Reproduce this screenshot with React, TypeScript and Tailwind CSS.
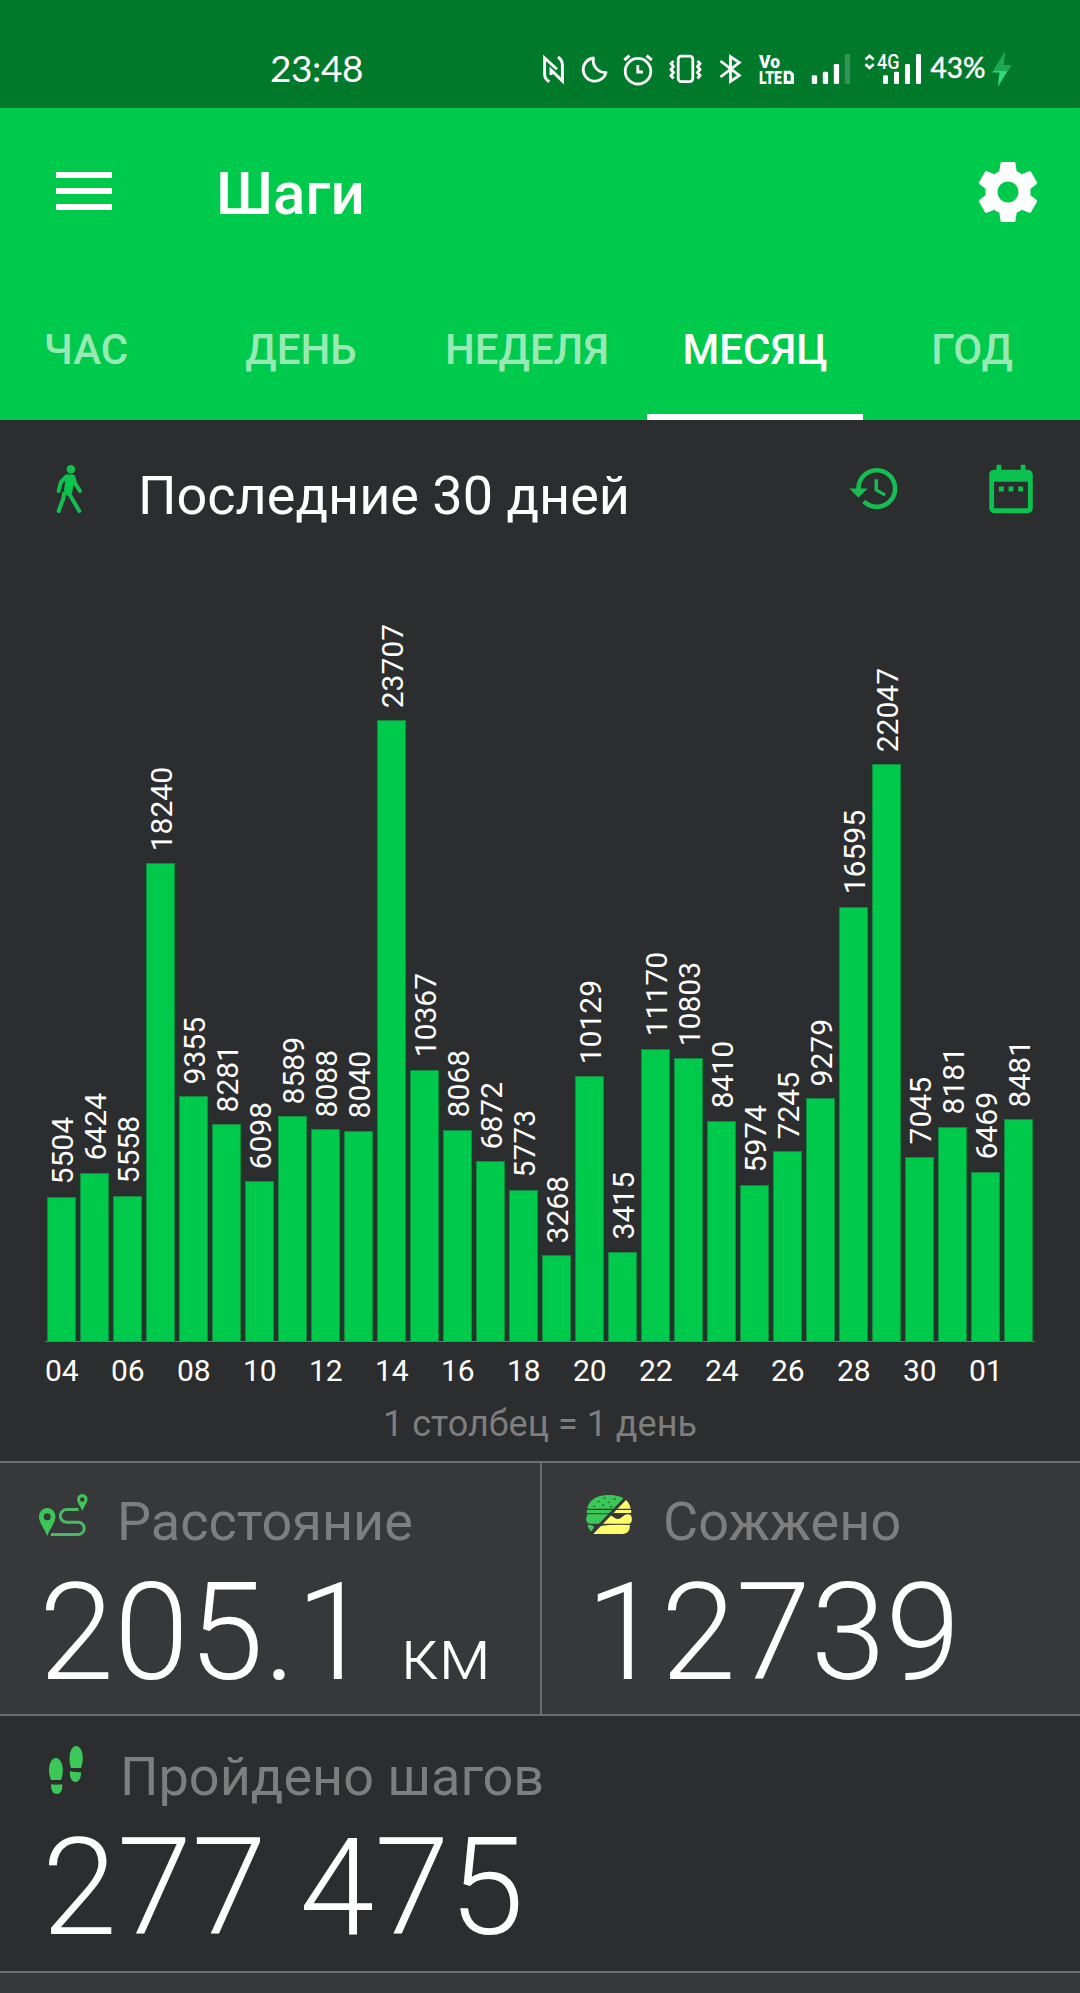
import React from "react";
import { MdDateRange, MdHistory } from "react-icons/md";

const steps = [
  5504, 6424, 5558, 18240, 9355, 8281, 6098, 8589, 8088, 8040, 23707, 10367, 8068, 6872, 5773, 3268, 10129, 3415,
  11170, 10803, 8410, 5974, 7245, 9279, 16595, 22047, 7045, 8181, 6469, 8481,
];
const days = ["04", "06", "08", "10", "12", "14", "16", "18", "20", "22", "24", "26", "28", "30", "01"];
const PX_PER_STEP = 0.02618;

function StatusBar() {
  return (
    <div className="flex h-[108px] shrink-0 items-center bg-[#00792b] pl-[270px] text-white">
      <span className="w-[270px] pt-[27px] font-['Lato'] text-[37px] leading-none tracking-[-0.4px]">23:48</span>
      <svg className="mt-[30px] h-[38px] w-[390px]" viewBox="540 50 390 38" fill="none" stroke="#fff" strokeWidth="2.8">
        {/* NFC */}
        <path d="M549.3 81.8Q544.6 79 544.6 74V58L557 69.3" strokeWidth="2.9" />
        <path d="M558 57Q562.4 60 562.4 65V81L551 70V75" strokeWidth="2.9" />
        {/* Do not disturb */}
        <path d="M593.5 58A11.6 11.6 0 1 0 606 72.5A12 12 0 0 1 593.5 58Z" strokeLinejoin="round" />
        {/* Alarm */}
        <circle cx="638" cy="71.2" r="12.8" />
        <path d="M637.8 65V72H643" />
        <path d="M624.3 60L629.5 55.6M646.5 55.6L651.8 60" strokeWidth="3" />
        {/* Vibration */}
        <rect x="678.2" y="56.2" width="14.6" height="25.4" rx="3" />
        <path d="M673.5 61L671 63.5L673.5 66.5L671 69.5L673.5 72.5L671 75.5L673.5 78.5M697.5 61L700 63.5L697.5 66.5L700 69.5L697.5 72.5L700 75.5L697.5 78.5" strokeWidth="2.8" />
        {/* Bluetooth */}
        <path d="M720.5 61L739.3 75.5L730.5 81.3V56.7L739.3 62.5L720.5 77" />
        {/* VoLTE */}
        <g fill="#fff" stroke="none" fontFamily="Roboto" fontWeight="900" fontSize="18.5">
          <text x="759" y="68" textLength="21" lengthAdjust="spacingAndGlyphs">Vo</text>
          <text x="759" y="84" textLength="23" lengthAdjust="spacingAndGlyphs">LTE</text>
        </g>
        <path d="M785.3 72.3H790L792.3 74.5V82.3H785.3Z" strokeWidth="3.2" />
        {/* Signal strength */}
        <g fill="#fff" stroke="none">
          <rect x="811.8" y="75.3" width="5.3" height="8.7" rx="1.3" />
          <rect x="822.8" y="71.7" width="5.3" height="12.3" rx="1.3" />
          <rect x="833.8" y="64" width="5.3" height="20" rx="1.3" />
          <rect x="844.8" y="54" width="5.3" height="30" rx="1.3" opacity="0.2" />
          <rect x="883" y="75.3" width="5" height="8.7" rx="1.3" />
          <rect x="894" y="71.7" width="5" height="12.3" rx="1.3" />
          <rect x="905" y="64" width="5" height="20" rx="1.3" />
          <rect x="916" y="54" width="5" height="30" rx="1.3" />
          <text x="877" y="68.5" fontFamily="Roboto" fontWeight="500" fontSize="20.5" textLength="22.5" lengthAdjust="spacingAndGlyphs">4G</text>
        </g>
        <path d="M865.5 59.5L869.6 55.8L873.7 59.5M865.5 64.3L869.6 68L873.7 64.3" strokeWidth="2.6" />
      </svg>
      <svg className="mt-[30px] h-[38px] w-[62px]" viewBox="930 50 62 38">
        <text x="930.5" y="78" fill="#fff" stroke="#fff" strokeWidth="0.5" fontFamily="Lato" fontSize="29" textLength="55" lengthAdjust="spacingAndGlyphs">
          43%
        </text>
      </svg>
      <svg className="mt-[31px] h-[36px] w-[20px]" viewBox="992 52 20 36">
        <path d="M1005 52L992.3 72.5H999.5L997.7 87L1011 65.5H1003.2Z" fill="#2fdc7c" />
        <path d="M1005 52L993 71H1007.6L1011 65.5H1003.2Z" fill="#1ca954" />
      </svg>
    </div>
  );
}

function Tab({ label, wide, active }: { label: string; wide?: boolean; active?: boolean }) {
  return (
    <div
      className={`flex h-full shrink-0 items-center justify-center border-b-[6px] pt-[9px] text-[42px] leading-none font-medium ${
        wide ? "w-[240px]" : "w-[216px]"
      } ${active ? "border-white text-white" : "border-transparent text-white/60"}`}
    >
      {label}
    </div>
  );
}

function Header() {
  return (
    <header className="h-[312px] shrink-0 overflow-hidden bg-[#00ca4b] text-white">
      <div className="flex h-[168px] items-center pr-[36px] pl-[56px]">
        <div className="-mt-[2px] flex w-[56px] flex-col gap-[10px]">
          <div className="h-[6px] bg-white" />
          <div className="h-[6px] bg-white" />
          <div className="h-[6px] bg-white" />
        </div>
        <h1 className="ml-[104px] flex-1 pt-[4px] text-[60px] leading-none font-medium">Шаги</h1>
        <svg className="size-[72px]" viewBox="0 0 24 24" fill="#fff">
          <path d="M12,15.5A3.5,3.5 0 0,1 8.5,12A3.5,3.5 0 0,1 12,8.5A3.5,3.5 0 0,1 15.5,12A3.5,3.5 0 0,1 12,15.5M19.43,12.97C19.47,12.65 19.5,12.33 19.5,12C19.5,11.67 19.47,11.34 19.43,11L21.54,9.37C21.73,9.22 21.78,8.95 21.66,8.73L19.66,5.27C19.54,5.05 19.27,4.96 19.05,5.05L16.56,6.05C16.04,5.66 15.5,5.32 14.87,5.07L14.5,2.42C14.46,2.18 14.25,2 14,2H10C9.75,2 9.54,2.18 9.5,2.42L9.13,5.07C8.5,5.32 7.96,5.66 7.44,6.05L4.95,5.05C4.73,4.96 4.46,5.05 4.34,5.27L2.34,8.73C2.21,8.95 2.27,9.22 2.46,9.37L4.57,11C4.53,11.34 4.5,11.67 4.5,12C4.5,12.33 4.53,12.65 4.57,12.97L2.46,14.63C2.27,14.78 2.21,15.05 2.34,15.27L4.34,18.73C4.46,18.95 4.73,19.03 4.95,18.95L7.44,17.94C7.96,18.34 8.5,18.68 9.13,18.93L9.5,21.58C9.54,21.82 9.75,22 10,22H14C14.25,22 14.46,21.82 14.5,21.58L14.87,18.93C15.5,18.67 16.04,18.34 16.56,17.94L19.05,18.95C19.27,19.03 19.54,18.95 19.66,18.73L21.66,15.27C21.78,15.05 21.73,14.78 21.54,14.63L19.43,12.97Z" />
        </svg>
      </div>
      <div className="-ml-[22px] flex h-[144px]">
        <Tab label="ЧАС" />
        <div className="-ml-[1px]">
          <Tab label="ДЕНЬ" />
        </div>
        <div className="-ml-[2px] flex">
          <Tab label="НЕДЕЛЯ" wide />
          <Tab label="МЕСЯЦ" active />
        </div>
        <div className="ml-[1px]">
          <Tab label="ГОД" />
        </div>
      </div>
    </header>
  );
}

function WalkIcon() {
  return (
    <svg className="h-[50px] w-[28px]" viewBox="55 464 28 50" fill="none" stroke="#14be50" strokeLinecap="round" strokeLinejoin="round">
      <circle cx="70.9" cy="469.3" r="4.3" fill="#14be50" stroke="none" />
      <path d="M66 475H73L74.3 477L71.8 492L70 495H66.5L64.6 490.5L65.5 482Z" fill="#06c84c" stroke="#06c84c" strokeWidth="1" />
      <path d="M66 477L61 482L58.6 491M73.3 477L75.5 484L80 491" strokeWidth="4" />
      <path d="M67 490L79.3 511M64 493.5L63.5 498L58.7 511" strokeWidth="4" />
    </svg>
  );
}

function Chart() {
  return (
    <section className="flex h-[921px] flex-col">
      <div className="flex h-[784px] w-[990px] items-end self-center border-b border-[#707172]">
        {steps.map((v, i) => (
          <div key={i} className="flex h-full w-[33px] flex-col items-center justify-end">
            <span className="mb-[12px] ml-[3px] rotate-180 text-[30px] leading-[30px] text-white [writing-mode:vertical-rl]">{v}</span>
            <div className="w-[33px] border-x-2 border-[#20362b]" style={{ height: v * PX_PER_STEP }}>
              <div className="h-full border-x border-t border-[#108a3c] bg-[#00ca4b]" />
            </div>
          </div>
        ))}
      </div>
      <div className="mt-[14px] flex w-[990px] self-center">
        {days.map((d) => (
          <div key={d} className="w-[66px]">
            <span className="block w-[33px] text-center text-[30px] leading-[30px] whitespace-nowrap text-white">
              {d}
            </span>
          </div>
        ))}
      </div>
      <div className="mt-[20px] text-center text-[36px] leading-none text-[#7e7e7e]">1 столбец = 1 день</div>
    </section>
  );
}

function RouteIcon() {
  return (
    <svg className="h-[44px] w-[52px]" viewBox="38 1493 52 44" fill="#3cc759">
      <path
        fillRule="evenodd"
        d="M47.2 1536.3C45 1529 38.9 1523 38.9 1516.5A8.3 8.5 0 0 1 55.5 1516.5C55.5 1523 49.4 1529 47.2 1536.3ZM47.2 1513.2A3.5 3.5 0 1 0 47.2 1520.2A3.5 3.5 0 1 0 47.2 1513.2Z"
      />
      <path
        fillRule="evenodd"
        d="M82.3 1511C81 1507 77.1 1503 77.1 1499.3A5.2 5.3 0 0 1 87.5 1499.3C87.5 1503 83.6 1507 82.3 1511ZM82.3 1497.2A2.3 2.3 0 1 0 82.3 1501.8A2.3 2.3 0 1 0 82.3 1497.2Z"
      />
      <path d="M78.5 1509.6H66.6A6.3 6.3 0 0 0 66.6 1522.2H78A6.2 6.2 0 0 1 78 1534.6H51" fill="none" stroke="#4abb62" strokeWidth="3" />
    </svg>
  );
}

function BurgerIcon() {
  return (
    <svg className="h-[39.3px] w-[46px]" viewBox="0 0 134 118" preserveAspectRatio="none">
      <defs>
        <clipPath id="upper">
          <path d="M0 0H118L18 108H0Z" />
        </clipPath>
        <clipPath id="lower">
          <path d="M134 0L125 6L20 118H134Z" />
        </clipPath>
      </defs>
      <g clipPath="url(#upper)" fill="#3cc759">
        <path d="M4 41C6 18 28 0 67 0S128 18 130 41Z" />
        <rect x="2" y="45" width="130" height="10" rx="3" />
        <path d="M4 58H130V86H8Q0 82 0 72Z" />
        <path d="M4 89L18 91L24 96L16 110Q7 104 4 89Z" />
        <g fill="#1d6a33">
          <ellipse cx="54" cy="9" rx="4" ry="2" />
          <ellipse cx="84" cy="12" rx="4" ry="2" />
          <ellipse cx="37" cy="20" rx="4" ry="2" />
          <ellipse cx="66" cy="22" rx="4" ry="2" />
          <ellipse cx="24" cy="34" rx="4" ry="2" />
          <ellipse cx="50" cy="30" rx="4" ry="2" />
          <ellipse cx="73" cy="35" rx="4" ry="2" />
        </g>
      </g>
      <g clipPath="url(#lower)" fill="#ffff6b">
        <path d="M80 41L108 14H116Q128 26 130 41Z" />
        <rect x="60" y="45" width="72" height="9" rx="3" />
        <path d="M40 86L62 60Q72 58 84 69Q95 76 106 65Q118 54 130 60Q134 66 134 74Q133 82 128 86Z" />
        <path d="M20 118L40 94Q70 88 128 90Q128 108 118 114Q110 118 95 118Z" />
      </g>
    </svg>
  );
}

function StepsIcon() {
  return (
    <svg className="h-[50px] w-[36px]" viewBox="48 1745 36 50" fill="#3cc759">
      <path d="M51 1780C49.5 1776 49 1773 49 1770C49 1764 51.5 1758 55.8 1758C60 1758 62.8 1764 62.8 1770C62.8 1774 62 1777 61 1780Z" />
      <path d="M51 1784.3Q56.5 1785 62 1784.3C63 1788 61.5 1794 57 1794C52.5 1794 51 1790 51 1784.3Z" />
      <path d="M71 1768C69.9 1765 69.5 1762 69.5 1758C69.5 1752 72 1746 76.2 1746C80.4 1746 82.8 1752 82.8 1758C82.8 1761.5 82 1765 81 1768Z" />
      <path d="M70 1771.3Q75.5 1772.2 81 1772.2C81.2 1777 79.5 1782 75.5 1782C71 1782 69.3 1776 70 1771.3Z" />
    </svg>
  );
}

export default function App() {
  return (
    <div className="flex h-[1993px] w-[1080px] flex-col overflow-hidden bg-[#2b2d2e] font-['Roboto',sans-serif]">
      <StatusBar />
      <Header />
      <div className="flex h-[138px] shrink-0 items-center pr-[40px] pl-[55px]">
        <WalkIcon />
        <h2 className="ml-[55px] flex-1 pt-[13px] text-[54px] leading-none text-white">Последние 30 дней</h2>
        <MdHistory className="mr-[80px] mb-[2px] size-[55px] text-[#14be50]" />
        <MdDateRange className="size-[58px] text-[#0cc24e]" />
      </div>
      <Chart />
      <div className="mt-[-18px] flex h-[255px] shrink-0 border-y-2 border-[#6b6c6d] bg-[#373839] text-white">
        <div className="w-[540px] pl-[38px]">
          <div className="flex h-[84px] items-start pt-[30px]">
            <RouteIcon />
            <span className="ml-[27px] pt-[2px] text-[54px] leading-none text-[#7e7e7e]">Расстояние</span>
          </div>
          <div className="mt-[19px] ml-[1px] text-[135px] leading-none font-light">
            205.1<span className="ml-[30px] text-[72px]">км</span>
          </div>
        </div>
        <div className="w-[540px] border-l-2 border-[#6b6c6d] pl-[44px]">
          <div className="flex h-[84px] items-start pt-[32px]">
            <BurgerIcon />
            <span className="ml-[31px] text-[54px] leading-none text-[#7e7e7e]">Сожжено</span>
          </div>
          <div className="mt-[19px] text-[135px] leading-none font-light">12739</div>
        </div>
      </div>
      <div className="h-[255px] shrink-0 pl-[48px] text-white">
        <div className="flex h-[84px] items-start pt-[29px]">
          <StepsIcon />
          <span className="ml-[36px] pt-[5px] text-[54px] leading-none text-[#7e7e7e]">Пройдено шагов</span>
        </div>
        <div className="mt-[21px] -ml-[6px] text-[135px] leading-none font-light">277 475</div>
      </div>
      <div className="h-[22px] shrink-0 border-t-2 border-[#6b6c6d] bg-[#373839]" />
    </div>
  );
}
